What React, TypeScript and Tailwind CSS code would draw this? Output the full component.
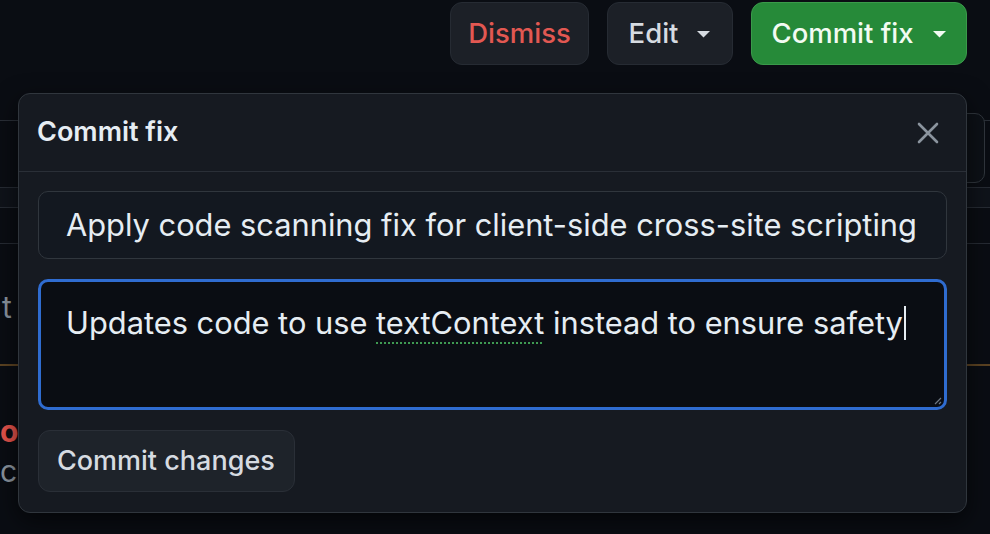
import React from "react";

const Caret = () => (
  <svg width="15" height="8" viewBox="0 0 15 8" className="ml-[18px]">
    <path d="M1 1h13L7.5 7.5z" fill="currentColor" />
  </svg>
);

export default function App() {
  return (
    <div
      className="relative w-[990px] h-[534px] overflow-hidden bg-[#0a0d13] text-[#e6edf3]"
      style={{ fontFamily: "Inter, 'Noto Sans', sans-serif" }}
    >
      {/* top toolbar */}
      <div className="flex justify-end gap-[18px] pr-[23px] pt-[2px]">
        <button className="h-[63px] w-[139px] rounded-[12px] border border-[#262b33] bg-[#1c2027] text-[27.5px] font-medium text-[#e25852]">
          Dismiss
        </button>
        <button className="flex h-[63px] w-[126px] items-center justify-center rounded-[12px] border border-[#262b33] bg-[#1c2027] text-[27.5px] font-medium text-[#d6dbe1]">
          Edit
          <Caret />
        </button>
        <button className="flex h-[63px] w-[216px] items-center justify-center rounded-[12px] border border-[#3a9a4a] bg-[#268a39] text-[27.5px] font-medium text-[#f2fbf2]">
          Commit fix
          <Caret />
        </button>
      </div>

      {/* page content behind the dialog */}
      <div className="mt-[55px]">
        <div className="h-px bg-[#2a2f37]" />
        <div className="flex h-[66px] justify-end pr-[5px]">
          <div className="-mt-[8px] h-[70px] w-[30px] rounded-[10px] border border-[#30363d] bg-[#0d1117]" />
        </div>
        <div className="h-px bg-[#262b33]" />
        <div className="h-[19px] bg-[#0f131a]" />
        <div className="h-px bg-[#262b33]" />
        <div className="h-[35px]" />
        <div className="h-px bg-[#262b33]" />
        <div className="h-[120px] pl-[2px] pt-[48px] text-[30px] leading-none text-[#8b949e]">t</div>
        <div className="h-[2px] bg-[#5c4322]" />
        <div className="pt-[50px] text-[30px] font-bold leading-none text-[#e5534b]">o</div>
        <div className="pt-[10px] text-[30px] leading-none text-[#8b949e]">c</div>
      </div>

      {/* commit dialog */}
      <div className="absolute left-[18px] top-[93px] flex w-[949px] flex-col rounded-[12px] border border-[#30363d] bg-[#161a21] shadow-[0_8px_24px_rgba(0,0,0,0.6)]">
        <div className="flex h-[78px] items-center justify-between border-b border-[#2a2f37] pl-[18px] pr-[27px]">
          <h2 className="text-[27px] font-semibold text-[#e6edf3]">Commit fix</h2>
          <svg width="22" height="22" viewBox="0 0 22 22" className="text-[#8b949e]">
            <path d="M2 2l18 18M20 2L2 20" stroke="currentColor" strokeWidth="2.6" strokeLinecap="round" />
          </svg>
        </div>
        <div className="flex flex-col gap-[20px] px-[19px] pb-[20px] pt-[19px]">
          <div className="flex h-[68px] items-center rounded-[10px] border border-[#30363d] bg-[#131820] pl-[27px] text-[30.8px] text-[#e6edf3]">
            Apply code scanning fix for client-side cross-site scripting
          </div>
          <div className="relative h-[131px] rounded-[10px] border-[3px] border-[#2f6cd0] bg-[#0a0d13] pl-[25px] pt-[18px] text-[30.8px] text-[#e6edf3]">
            <span>Updates code to use </span>
            <span className="underline decoration-dotted decoration-[#3f9a52] decoration-2 underline-offset-[8px]">
              textContext
            </span>
            <span> instead to ensure safety</span>
            <span className="ml-[1px] inline-block h-[34px] w-[2px] translate-y-[6px] bg-[#e6edf3]" />
            <svg width="10" height="10" viewBox="0 0 10 10" className="absolute bottom-[2px] right-[2px] text-[#6e7681]">
              <path d="M9 3L3 9M9 7L7 9" stroke="currentColor" strokeWidth="1.2" />
            </svg>
          </div>
          <div>
            <button className="h-[62px] w-[257px] rounded-[12px] border border-[#2a2f37] bg-[#1e232a] pl-[18px] text-left text-[27px] font-medium text-[#d6dbe1]">
              Commit changes
            </button>
          </div>
        </div>
      </div>
    </div>
  );
}
